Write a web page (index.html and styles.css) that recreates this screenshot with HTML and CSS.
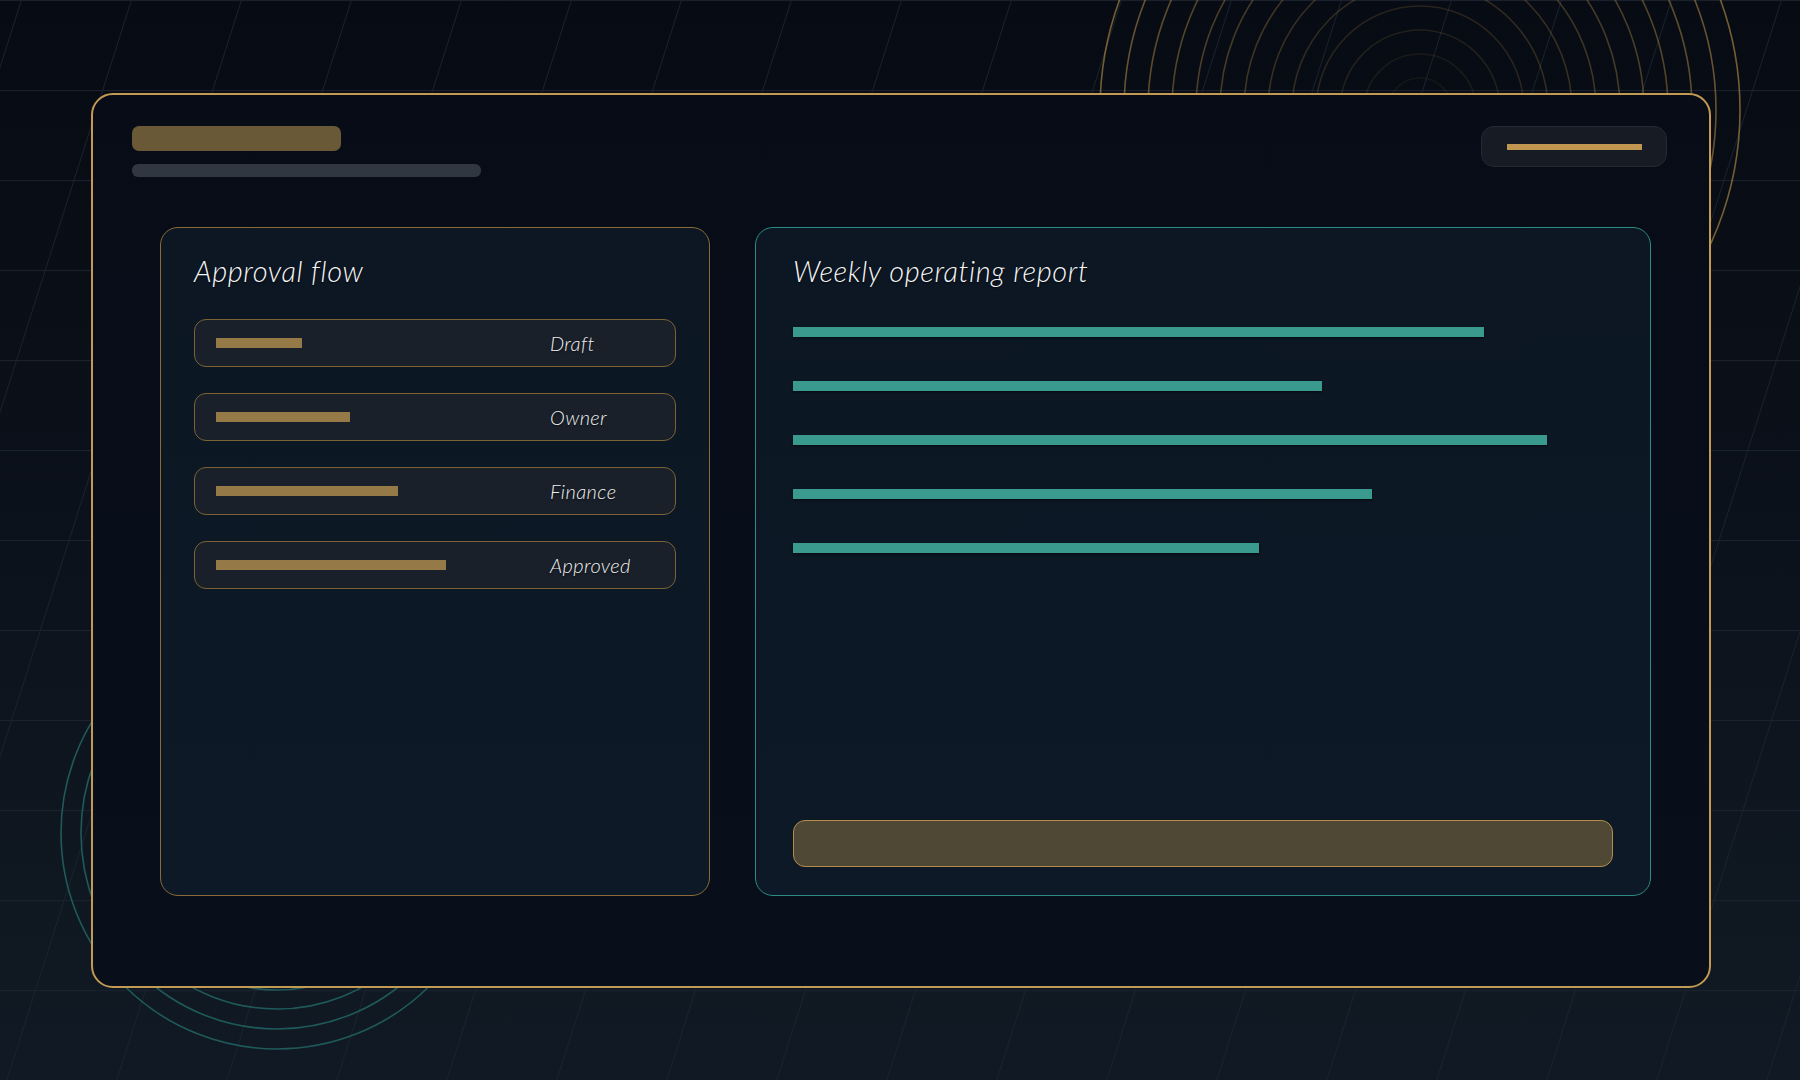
FILE: index.html
```html
<!DOCTYPE html>
<html lang="en">
  <head>
    <meta charset="UTF-8" />
    <meta name="viewport" content="width=device-width, initial-scale=1.0" />
    <title>Operations overview</title>
    <link rel="stylesheet" href="styles.css">
  </head>
  <body>
    <!-- background decoration: skewed grid + ripple rings -->
    <svg class="backdrop" width="1800" height="1080" viewBox="0 0 1800 1080">
      <defs>
        <pattern id="grid" width="110" height="90" patternUnits="userSpaceOnUse"
          patternTransform="translate(21 0) skewX(-17.7)">
          <rect width="1" height="90" fill="#1a222d" />
          <rect width="110" height="1" fill="#1a222d" />
        </pattern>
      </defs>
      <rect width="1800" height="1080" fill="url(#grid)" />
      <g fill="none" stroke="#b8914a" stroke-width="1.6">
        <circle cx="1420" cy="110" r="32" stroke-opacity="0.08" />
        <circle cx="1420" cy="110" r="56" stroke-opacity="0.11" />
        <circle cx="1420" cy="110" r="80" stroke-opacity="0.15" />
        <circle cx="1420" cy="110" r="104" stroke-opacity="0.19" />
        <circle cx="1420" cy="110" r="128" stroke-opacity="0.23" />
        <circle cx="1420" cy="110" r="152" stroke-opacity="0.27" />
        <circle cx="1420" cy="110" r="176" stroke-opacity="0.31" />
        <circle cx="1420" cy="110" r="200" stroke-opacity="0.35" />
        <circle cx="1420" cy="110" r="224" stroke-opacity="0.39" />
        <circle cx="1420" cy="110" r="248" stroke-opacity="0.43" />
        <circle cx="1420" cy="110" r="272" stroke-opacity="0.48" />
        <circle cx="1420" cy="110" r="296" stroke-opacity="0.54" />
        <circle cx="1420" cy="110" r="320" stroke-opacity="0.62" />
      </g>
      <g fill="none" stroke="#1f5a5b" stroke-width="1.6">
        <circle cx="277" cy="833" r="157" />
        <circle cx="277" cy="833" r="176" />
        <circle cx="277" cy="833" r="196" />
        <circle cx="277" cy="833" r="216" />
      </g>
    </svg>

    <main class="frame">
      <header class="frame-head">
        <div class="head-titles">
          <div class="pill-title"></div>
          <div class="pill-sub"></div>
        </div>
        <button class="head-action"><span></span></button>
      </header>

      <section class="cards">
        <div class="card card-flow">
          <h2>Approval flow</h2>
          <ul class="steps">
            <li class="step">
              <span class="step-bar" style="width: 86px"></span>
              <span class="step-label">Draft</span>
            </li>
            <li class="step">
              <span class="step-bar" style="width: 134px"></span>
              <span class="step-label">Owner</span>
            </li>
            <li class="step">
              <span class="step-bar" style="width: 182px"></span>
              <span class="step-label">Finance</span>
            </li>
            <li class="step">
              <span class="step-bar" style="width: 230px"></span>
              <span class="step-label">Approved</span>
            </li>
          </ul>
        </div>

        <div class="card card-report">
          <h2>Weekly operating report</h2>
          <div class="report-bars">
            <div class="report-bar" style="width: 691px"></div>
            <div class="report-bar" style="width: 529px"></div>
            <div class="report-bar" style="width: 754px"></div>
            <div class="report-bar" style="width: 579px"></div>
            <div class="report-bar" style="width: 466px"></div>
          </div>
          <div class="report-footer"></div>
        </div>
      </section>
    </main>
  </body>
</html>
```

FILE: styles.css
```css
body {
  margin: 0;
  padding: 93px 0 0 91px;
  box-sizing: border-box;
  width: 1800px;
  height: 1080px;
  overflow: hidden;
  position: relative;
  font-family: Lato, "Open Sans", sans-serif;
  background: linear-gradient(180deg, #070b13 0%, #0b111a 45%, #111a24 100%);
}
.backdrop {
  position: absolute;
  left: 0;
  top: 0;
  z-index: 0;
}
.frame {
  position: relative;
  z-index: 1;
  box-sizing: border-box;
  width: 1620px;
  height: 895px;
  padding: 31px 42px 0 39px;
  border: 2px solid #c39a53;
  border-radius: 22px;
  background: linear-gradient(180deg, #070c17 0%, #080f1b 100%);
}
.frame-head {
  display: flex;
  justify-content: space-between;
  align-items: flex-start;
}
.pill-title {
  width: 209px;
  height: 25px;
  border-radius: 7px;
  background-color: #6a5936;
}
.pill-sub {
  width: 349px;
  height: 13px;
  margin-top: 13px;
  border-radius: 6px;
  background-color: #313741;
}
.head-action {
  display: flex;
  align-items: center;
  justify-content: center;
  box-sizing: border-box;
  width: 186px;
  height: 41px;
  padding: 0;
  border: 1px solid #232a35;
  border-radius: 13px;
  background-color: #161b24;
  cursor: pointer;
}
.head-action span {
  display: block;
  width: 135px;
  height: 6px;
  background-color: #c09650;
}
.cards {
  display: flex;
  gap: 45px;
  height: 669px;
  margin: 50px 16px 0 28px;
}
.card {
  box-sizing: border-box;
  border-radius: 18px;
  background: linear-gradient(180deg, #0c1723 0%, #0d1927 100%);
}
.card h2 {
  margin: 0;
  padding-top: 26px;
  font-size: 29px;
  font-style: italic;
  font-weight: 300;
  letter-spacing: 0.6px;
  line-height: 34px;
  color: #f6f6f6;
  text-shadow: 0 1px 2px rgba(0, 0, 0, 0.7);
}
.card-flow {
  width: 550px;
  padding: 0 33px;
  border: 1px solid #8a6b37;
}
.steps {
  list-style: none;
  margin: 31px 0 0;
  padding: 0;
  display: flex;
  flex-direction: column;
  gap: 26px;
}
.step {
  display: grid;
  grid-template-columns: 1fr 104px;
  align-items: center;
  box-sizing: border-box;
  height: 48px;
  padding: 0 21px;
  border: 1px solid #7d6334;
  border-radius: 12px;
  background-color: #19202a;
}
.step-bar {
  display: block;
  height: 10px;
  background-color: #957a48;
}
.step-label {
  font-size: 20px;
  font-style: italic;
  font-weight: 300;
  letter-spacing: 0.4px;
  color: #f0f0f0;
  text-shadow: 0 1px 2px rgba(0, 0, 0, 0.7);
}
.card-report {
  flex: 1;
  display: flex;
  flex-direction: column;
  padding: 0 37px;
  border: 1px solid #2a8c82;
}
.report-bars {
  display: flex;
  flex-direction: column;
  gap: 44px;
  margin-top: 39px;
}
.report-bar {
  height: 10px;
  background-color: #3a9a8d;
  box-shadow: 0 1px 2px rgba(0, 0, 0, 0.6);
}
.report-footer {
  box-sizing: border-box;
  height: 47px;
  margin-top: auto;
  margin-bottom: 28px;
  border: 1px solid #b38c4a;
  border-radius: 12px;
  background-color: #4e4835;
}
```
